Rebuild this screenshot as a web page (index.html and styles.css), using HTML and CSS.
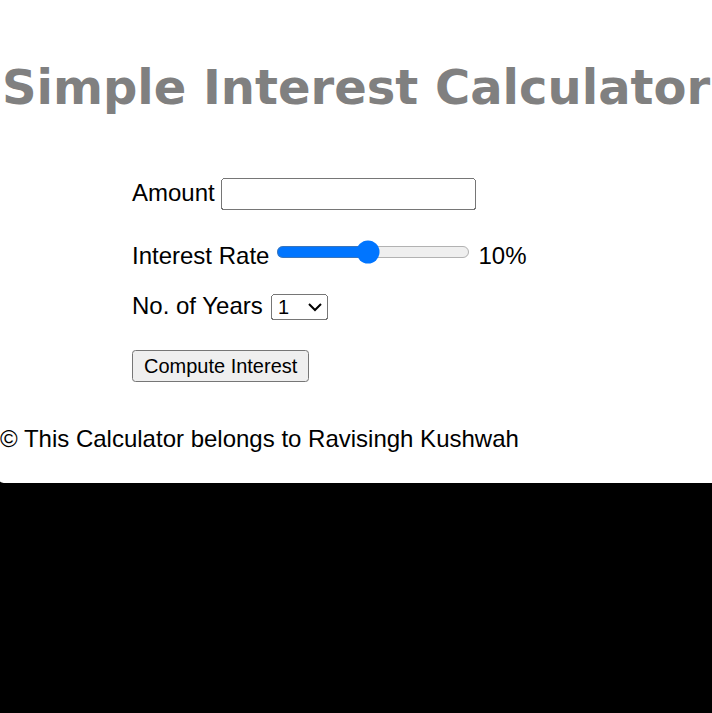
FILE: index.html
```html
<!DOCTYPE html>
<html lang="en">
<head>
<meta charset="utf-8">
<title>Simple Interest Calculator</title>
<link rel="stylesheet" href="styles.css">
</head>
<body>
<div class="page">
  <h1 class="title">Simple Interest Calculator</h1>
  <form class="calc">
    <div class="row row-amount">Amount <input type="number" class="amount"></div>
    <div class="row row-rate">Interest Rate <input type="range" class="rate" min="1" max="20" value="10" step="0.25"> <span class="rate-val">10%</span></div>
    <div class="row row-years">No. of Years <select class="years">
        <option>1</option><option>2</option><option>3</option><option>4</option><option>5</option>
        <option>6</option><option>7</option><option>8</option><option>9</option><option>10</option>
      </select></div>
    <div class="row row-btn"><button type="button" class="compute">Compute Interest</button></div>
  </form>
  <p class="footer">&copy; This Calculator belongs to Ravisingh Kushwah</p>
</div>
</body>
</html>
```
FILE: styles.css
```css
html, body {
  margin: 0;
  padding: 0;
  background: #000;
}
body {
  font-family: "Liberation Sans", Arial, sans-serif;
  font-size: 16px;
}
.page {
  zoom: 1.5;
  background: #fff;
  padding: 39px 0 0;
  border-bottom-left-radius: 4px 1.2px;
  overflow: hidden;
  height: 283px;
}
.title {
  margin: 0;
  font-family: "DejaVu Sans", Verdana, sans-serif;
  font-weight: bold;
  font-size: 32px;
  color: #808080;
  text-align: center;
  white-space: nowrap;
}
.calc {
  padding: 42px 0 0 88px;
  margin: 0;
  color: #000;
}
.row {
  margin-bottom: 18.4px;
}
.row-rate {
  margin-bottom: 14.4px;
}
.row-years {
  margin-bottom: 20.4px;
}
.amount, .years, .compute {
  font-family: "Liberation Sans", Arial, sans-serif;
  font-size: 13.333px;
}
.amount {
  width: 162px;
}
.rate {
  margin: 2px 1.5px 2px 0;
}
.years {
  margin-left: 1px;
  width: 38px;
}
.footer {
  margin: 28.4px 0 0;
  color: #000;
}
```
